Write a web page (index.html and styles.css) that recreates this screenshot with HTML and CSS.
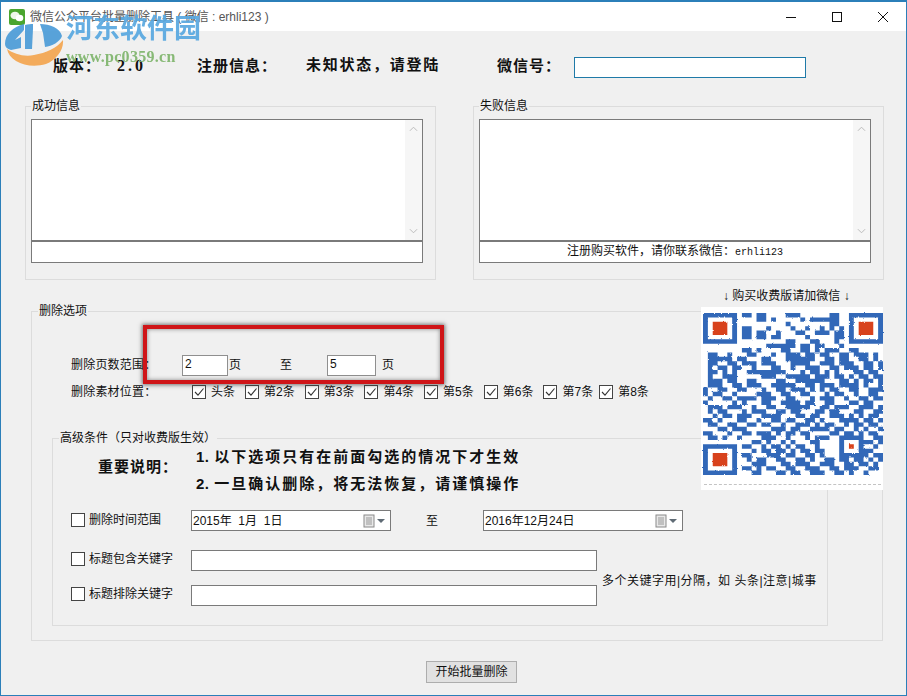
FILE: index.html
```html
<!DOCTYPE html>
<html lang="zh-CN">
<head>
<meta charset="utf-8">
<title>微信公众平台批量删除工具</title>
<link rel="stylesheet" href="styles.css">
</head>
<body>
<svg class="defs" aria-hidden="true">
  <symbol id="tick" viewBox="0 0 12 12"><path d="M2 6l3 3.200 5.500-6.700" fill="none" stroke="#333" stroke-width="1.100"/></symbol>
  <symbol id="cal" viewBox="0 0 22 14">
    <rect x="1" y="1" width="10" height="12" fill="#e8e8e8" stroke="#8a8a8a"/>
    <path d="M3 4h6M3 6h6M3 8h6M3 10h6M4 3v8M6 3v8M8 3v8" stroke="#a5a5a5" stroke-width=".7"/>
    <path d="M14 5h8l-4 4z" fill="#5f6b75"/>
  </symbol>
  <filter id="rough" x="-2%" y="-2%" width="104%" height="104%">
    <feTurbulence type="fractalNoise" baseFrequency=".35" numOctaves="2" seed="4"/>
    <feDisplacementMap in="SourceGraphic" scale="2.200"/>
    <feGaussianBlur stdDeviation=".45"/>
  </filter>
</svg>
<div class="window">
  <header class="titlebar">
    <svg class="app-icon" viewBox="0 0 16 16"><rect width="16" height="16" rx="2" fill="#4aa52e"/><ellipse cx="6" cy="6.500" rx="4.500" ry="3.800" fill="#eef6ea"/><ellipse cx="10.500" cy="9" rx="3.800" ry="3.200" fill="#fff"/></svg>
    <span class="title">微信公众平台批量删除工具 ( 微信 : erhli123 )</span>
    <div class="controls">
      <svg viewBox="0 0 46 29"><path d="M18 15.500h10" stroke="#111"/></svg>
      <svg viewBox="0 0 46 29"><rect x="18.500" y="10.500" width="9" height="9" fill="none" stroke="#111"/></svg>
      <svg viewBox="0 0 46 29"><path d="M18 10l10 10M28 10l-10 10" stroke="#111" fill="none"/></svg>
    </div>
  </header>

  <main class="content">
    <div class="info-row">
      <b class="i-ver">版本<span class="tc">：</span></b><b class="i-num">2.0</b><b class="i-reg">注册信息<span class="tc">：</span></b><b class="i-state">未知状态，请登陆</b><b class="i-wx">微信号<span class="tc">：</span></b>
      <div class="wx-input"></div>
    </div>

    <div class="panels">
      <fieldset class="group panel">
        <legend>成功信息</legend>
        <div class="logbox"><div class="scroll"><svg viewBox="0 0 10 6"><path d="M1 5l4-4 4 4" fill="none" stroke="#b5b5b5"/></svg><svg viewBox="0 0 10 6"><path d="M1 1l4 4 4-4" fill="none" stroke="#b5b5b5"/></svg></div></div>
        <div class="statusbox"></div>
      </fieldset>
      <fieldset class="group panel">
        <legend>失败信息</legend>
        <div class="logbox"><div class="scroll"><svg viewBox="0 0 10 6"><path d="M1 5l4-4 4 4" fill="none" stroke="#b5b5b5"/></svg><svg viewBox="0 0 10 6"><path d="M1 1l4 4 4-4" fill="none" stroke="#b5b5b5"/></svg></div></div>
        <div class="statusbox">注册购买软件，请你联系微信：<span class="mono">erhli123</span></div>
      </fieldset>
    </div>

    <fieldset class="group options">
      <legend>删除选项</legend>
      <div class="range-row">
        <span class="row-label">删除页数范围：</span>
        <span class="field page-a">2</span><span class="unit-a">页</span>
        <span class="to">至</span>
        <span class="field page-b">5</span><span class="unit-b">页</span>
      </div>
      <div class="pos-row">
        <span class="row-label wide">删除素材位置：</span>
        <label class="check"><svg class="cb"><use href="#tick"/></svg>头条</label>
        <label class="check"><svg class="cb"><use href="#tick"/></svg>第2条</label>
        <label class="check"><svg class="cb"><use href="#tick"/></svg>第3条</label>
        <label class="check"><svg class="cb"><use href="#tick"/></svg>第4条</label>
        <label class="check"><svg class="cb"><use href="#tick"/></svg>第5条</label>
        <label class="check"><svg class="cb"><use href="#tick"/></svg>第6条</label>
        <label class="check"><svg class="cb"><use href="#tick"/></svg>第7条</label>
        <label class="check"><svg class="cb"><use href="#tick"/></svg>第8条</label>
      </div>

      <fieldset class="group advanced">
        <legend>高级条件（只对收费版生效）</legend>
        <div class="notes">
          <b class="notes-head">重要说明<span class="tc">：</span></b>
          <div class="notes-list">
            <b><span class="num">1. </span>以下选项只有在前面勾选的情况下才生效</b>
            <b><span class="num">2. </span>一旦确认删除，将无法恢复，请谨慎操作</b>
          </div>
        </div>
        <div class="date-row">
          <label class="check cond"><svg class="cb"></svg>删除时间范围</label>
          <div class="date"><span>2015年&nbsp; 1月&nbsp; 1日</span><svg class="cal"><use href="#cal"/></svg></div>
          <span class="date-to">至</span>
          <div class="date"><span>2016年12月24日</span><svg class="cal"><use href="#cal"/></svg></div>
        </div>
        <div class="kw-block">
          <div class="kw-rows">
            <div class="kw-row"><label class="check cond"><svg class="cb"></svg>标题包含关键字</label><div class="kw-input"></div></div>
            <div class="kw-row"><label class="check cond"><svg class="cb"></svg>标题排除关键字</label><div class="kw-input"></div></div>
          </div>
          <span class="kw-note">多个关键字用|分隔，如 头条|注意|城事</span>
        </div>
      </fieldset>
    </fieldset>

    <button class="start" type="button">开始批量删除</button>
  </main>

  <div class="qr-caption">↓ 购买收费版请加微信 ↓</div>
  <div class="qr"><svg id="qr" viewBox="0 0 37 37" preserveAspectRatio="none"></svg></div>
  <div class="highlight"></div>

  <div class="watermark">
    <svg class="wm-logo" viewBox="5 15 60 54">
      <path d="M5 44C5 34 13 27 24 24V30L15 40 21 37V48L11 50C7 49 5 47 5 44Z" fill="#4c9cd8"/>
      <path d="M25 25C28 24 31 24 33 24V29L32 49H25Z" fill="#4c9cd8"/>
      <path d="M40 24C50 24 60 28 62 36C60 42 52 46 45 47L43 33Z" fill="#4c9cd8"/>
      <path d="M7 49C14 54 24 57 34 55C46 53 57 48 63 40C64 50 56 60 46 64C36 67 24 66 16 61C11 58 8 54 7 49Z" fill="#f4a650"/>
    </svg>
    <div class="wm-text">
      <div class="wm-cn">河东软件园</div>
      <div class="wm-url">www.pc0359.cn</div>
    </div>
  </div>
</div>
<script src="qr.js"></script>
</body>
</html>
```

FILE: styles.css
```css
* { box-sizing: border-box; }
html, body { margin: 0; padding: 0; }
body {
  width: 907px; height: 696px; overflow: hidden;
  font: 12px/14px "Liberation Sans", "Noto Sans CJK SC", sans-serif;
  color: #111;
}
b { font-weight: 700; }
.tc { font-family: "Noto Sans CJK TC", sans-serif; }
.defs { position: absolute; width: 0; height: 0; }

.window {
  position: relative; width: 907px; height: 696px;
  background: #f0f0f0; border: 1px solid #2b7fb9; border-top-width: 2px;
  overflow: hidden;
}

.titlebar { display: flex; align-items: center; height: 29px; background: #fff; padding-left: 8px; }
.app-icon { width: 16px; height: 16px; flex: none; }
.title { margin-left: 5px; color: #555; }
.controls { display: flex; margin-left: auto; }
.controls svg { width: 46px; height: 29px; display: block; }

.info-row { display: flex; align-items: center; height: 21px; margin-top: 26px; padding-left: 52px; font-size: 15px; }
.info-row b { margin-bottom: 4px; letter-spacing: 1px; }
.i-ver { width: 64px; }
.info-row .i-num { width: 80px; letter-spacing: 3px; font-family: "Liberation Serif", serif; font-size: 16px; }
.i-reg { width: 109px; }
.info-row .i-state { width: 191px; letter-spacing: 1.75px; margin-bottom: 6px; }
.i-wx { width: 77px; }
.wx-input { width: 232px; height: 21px; background: #fff; border: 1px solid #1f7aa8; }

.group { margin: 0; min-width: 0; border: 1px solid #dcdcdc; padding: 0; }
.group > legend { padding: 0 1px; line-height: 14px; }

.panels { display: flex; gap: 37px; margin-top: 21px; padding-left: 24px; }
.panel { width: 411px; height: 181px; padding: 6px 12px 0 5px; }
.logbox { position: relative; height: 123px; background: #fff; border: 1px solid #7a7a7a; border-bottom-width: 2px; }
.scroll { position: absolute; top: 0; right: 0; bottom: 0; width: 17px; background: #f6f6f6; display: flex; flex-direction: column; justify-content: space-between; align-items: center; padding: 6px 0; }
.scroll svg { width: 9px; height: 6px; }
.statusbox { height: 21px; background: #fff; border: 1px solid #7a7a7a; border-top: 0; text-align: center; line-height: 19px; }
.mono { font-family: "Liberation Mono", monospace; font-size: 10px; }

.options { width: 852px; height: 337px; margin: 24px 0 0 30px; }
.options > legend { margin-left: 6px; }
.range-row { display: flex; align-items: center; height: 22px; margin-top: 36px; padding-left: 39px; }
.row-label { width: 111px; letter-spacing: .2px; }
.row-label.wide { width: 121px; }
.field { width: 46px; height: 21px; background: #fff; border: 1px solid #8f8f8f; padding-left: 2px; line-height: 17px; }
.page-b { width: 49px; margin-top: 1px; }
.unit-a { margin-left: 1px; width: 51px; }
.to { width: 47px; }
.unit-b { margin-left: 6px; }

.pos-row { display: flex; align-items: center; margin-top: 8px; padding-left: 39px; height: 16px; }
.check { display: flex; align-items: center; margin-right: 10px; }
.check:last-child { margin-left: -4px; }
.cb { width: 14px; height: 14px; margin-right: 5px; background: #fff; border: 1px solid #444; flex: none; display: block; }

.advanced { width: 776px; height: 195px; margin: 31px 0 0 20px; }
.advanced > legend { margin-left: 6px; }
.notes { display: flex; align-items: center; margin-top: -2px; padding-left: 45px; font-size: 15px; }
.notes-head { width: 98px; letter-spacing: 1px; margin-bottom: 8px; }
.notes-list { display: flex; flex-direction: column; }
.notes-list b { height: 27px; line-height: 27px; letter-spacing: 2px; }
.num { letter-spacing: .5px; }

.date-row { display: flex; align-items: center; height: 21px; margin-top: 13px; padding-left: 18px; }
.check.cond { width: 120px; margin: 0; flex: none; }
.date-row .check.cond { margin-bottom: 2px; }
.kw-row .check.cond { margin-bottom: 4px; }
.cond .cb { margin-right: 4px; }
.date { display: flex; align-items: center; justify-content: space-between; width: 200px; height: 21px; background: #fff; border: 1px solid #7a7a7a; padding: 0 5px 0 1px; }
.cal { width: 22px; height: 14px; }
.date-to { width: 92px; padding-left: 35px; }

.kw-block { display: flex; align-items: center; margin-top: 19px; padding-left: 18px; }
.kw-rows { display: flex; flex-direction: column; gap: 14px; }
.kw-row { display: flex; align-items: center; }
.kw-input { width: 406px; height: 21px; background: #fff; border: 1px solid #7a7a7a; }
.kw-note { margin: 6px 0 0 5px; white-space: nowrap; letter-spacing: .5px; }

.start { display: block; width: 91px; height: 22px; margin: 20px 0 0 425px; padding: 0; background: #e1e1e1; border: 1px solid #adadad; font: inherit; color: #111; }

.qr-caption { position: absolute; left: 722px; top: 287px; white-space: nowrap; }
.qr { position: absolute; left: 700px; top: 305px; width: 182px; height: 183px; background: #fff; padding: 6px 0 15px 2px; }
.qr::after { content: ""; position: absolute; left: 3px; right: 2px; bottom: 5px; border-bottom: 1px dashed #c4c4c4; }
.qr svg { display: block; width: 180px; height: 162px; filter: url(#rough); }
.qr-blue { fill: #3068b8; }
.qr-red { fill: #d8431c; }

.highlight { position: absolute; left: 142px; top: 323px; width: 301px; height: 59px; border: 4px solid #cf1518; box-shadow: 0 0 4px 1px rgba(60,60,60,.7), inset 0 0 4px rgba(60,60,60,.6); }

.watermark { position: absolute; left: 4px; top: 12px; display: flex; opacity: .92; }
.wm-logo { width: 60px; height: 54px; margin-top: 1px; flex: none; }
.wm-text { margin-left: 1px; }
.wm-cn { font: 700 27px/30px "Liberation Serif", "Noto Sans CJK SC", serif; color: #58a8e0; white-space: nowrap; }
.wm-url { font: 700 16px/20px "Liberation Serif", serif; color: #7fb56c; margin-top: 3px; letter-spacing: .3px; white-space: nowrap; }
```

FILE: qr.js
```js
var rows = [
"0000000011011000011100000011000000000",
"0000000000011010000010111111000000000",
"0000000000000000010000000011000000000",
"0000000011000100001001001010100000000",
"0000000011011001000110011101100000000",
"0000000011011011000001000001100000000",
"0000000000000000011000110001000000000",
"0000000000000111111011011000100000000",
"0000000011010000110011010111001100000",
"0110010001100010011101101100110111010",
"0111110110001100011111100110110011010",
"0110011011101110001111001110111001101",
"0101101100100011001001110011011101101",
"0110101001111111100010110101000110110",
"0100111000001110011111011101101011011",
"0111011001100001100111111000110101101",
"0111001101110011111001101110111101001",
"1001100110001001101110101011001100111",
"1011001000011100110011000101100100110",
"0100110111101110011000101110010011011",
"1000001010001100111101100110001101100",
"0111011100100110011111001101110011101",
"0101100010111001101100011011000110011",
"0010110111001111000110110011101010110",
"1101000110010011011001101000111101101",
"0110011001101100100111010110010110110",
"0001101110000011101100111101100101001",
"1100010011011101011011000011011010110",
"0110100100001110010001011100000110011",
"0000000000110100101000110000000001101",
"0000000011001011010110010000000110010",
"0000000000101101101011011000000101100",
"0000000011000111011001101000000001011",
"0000000001011001100110100110110110101",
"0000000000111000110111001110011011010",
"0000000011010110011001110011011100110",
"0000000000110001101100111001101001000"
];
var d = "";
function box(x, y, w, h) { return "M" + x + " " + y + "h" + w + "v" + h + "h-" + w + "z"; }
function reserved(c, r) {
  return (c < 8 && r < 8) || (c > 28 && r < 8) || (c < 8 && r > 28) ||
    (c >= 28 && c <= 32 && r >= 28 && r <= 32);
}
rows.forEach(function (row, r) {
  for (var c = 0; c < row.length; c++) {
    if (row[c] === "1" && !reserved(c, r)) d += box(c, r, 1, 1);
  }
});
function finder(x, y) {
  return box(x, y, 7, 1) + box(x, y + 6, 7, 1) + box(x, y + 1, 1, 5) + box(x + 6, y + 1, 1, 5);
}
d += finder(0, 0) + finder(30, 0) + finder(0, 30);
d += box(28, 28, 5, 1) + box(28, 32, 5, 1) + box(28, 29, 1, 3) + box(32, 29, 1, 3);
var red = box(2, 2, 3, 3) + box(32, 2, 3, 3) + box(2, 32, 3, 3) + box(30, 30, 1, 1);
document.getElementById("qr").innerHTML =
  '<path class="qr-blue" d="' + d + '"/><path class="qr-red" d="' + red + '"/>';
```
